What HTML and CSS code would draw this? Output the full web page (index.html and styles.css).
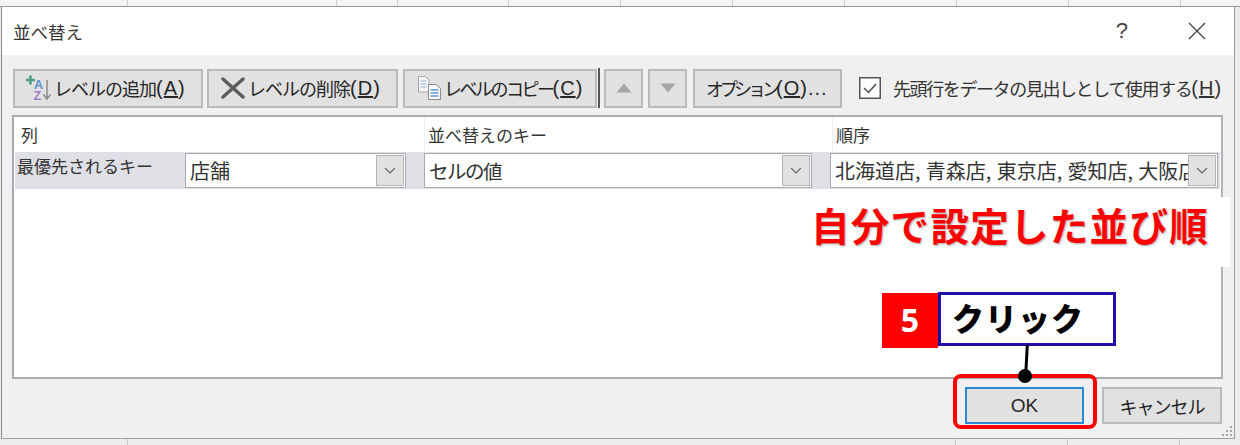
FILE: index.html
```html
<!DOCTYPE html>
<html lang="ja">
<head>
<meta charset="utf-8">
<title>並べ替え</title>
<link rel="stylesheet" href="styles.css">
</head>
<body>
<div class="sheet">
  <div class="gridtop"><i></i><i></i><i></i><i></i><i></i><i></i><i></i><i></i><i></i><i></i></div>
  <div class="dialog">
    <header class="titlebar">
      <span class="title">並べ替え</span>
      <span class="help">?</span>
      <svg class="close" width="18" height="18" viewBox="0 0 18 18"><path d="M1 1L17 17M17 1L1 17" stroke="#444" stroke-width="1.3" fill="none"/></svg>
    </header>
    <div class="body">
      <div class="toolbar">
        <button class="btn b-add">
          <svg width="25" height="31" viewBox="0 0 25 31">
            <path d="M0 7h9M4.500 2.500v9" stroke="#4f9f7d" stroke-width="2.600" fill="none"/>
            <text class="az"><tspan class="a" x="8" y="15.500">A</tspan><tspan class="z" x="7.500" y="26.500">Z</tspan></text>
            <path d="M21 7v19M17.500 21.500l3.500 4.500 3.500-4.500" stroke="#8a8a8a" stroke-width="1.500" fill="none"/>
          </svg>
          <span class="t17">レベルの追加</span><span class="key">(<u>A</u>)</span>
        </button>
        <button class="btn b-del">
          <svg width="24" height="22" viewBox="0 0 24 22"><path d="M2 2L22 20M22 2L2 20" stroke="#5c5c5c" stroke-width="3.400" fill="none" stroke-linecap="round"/></svg>
          <span class="t17">レベルの削除</span><span class="key">(<u>D</u>)</span>
        </button>
        <button class="btn b-copy">
          <svg width="23" height="24" viewBox="0 0 23 24">
            <path d="M.5.5h7l3.500 3.500v12H.5z" fill="#f6f6f6" stroke="#a5a5a5"/>
            <path d="M2.500 5h5.500M2.500 8h6M2.500 11h6" stroke="#8bb2da" stroke-width="1.200"/>
            <path d="M10.500 8.500h7.500l4.500 4v11h-12z" fill="#fbfbfb" stroke="#8a8a8a"/>
            <path d="M12.500 14h8M12.500 17h8M12.500 20h8" stroke="#5f9ad2" stroke-width="1.400"/>
          </svg>
          <span class="t15">レベルのコピー</span><span class="key">(<u>C</u>)</span>
        </button>
        <span class="sep"></span>
        <button class="btn b-arrow b-up"><svg width="16" height="10" viewBox="0 0 16 10"><path d="M8 .5L15.500 9.500H.5z" fill="#a6a6a6"/></svg></button>
        <button class="btn b-arrow b-down"><svg width="16" height="10" viewBox="0 0 16 10"><path d="M8 9.500L15.500 .5H.5z" fill="#a6a6a6"/></svg></button>
        <button class="btn b-opt"><span class="t14">オプション</span><span class="key">(<u>O</u>)...</span></button>
        <label class="check">
          <svg class="box" width="22" height="22" viewBox="0 0 22 22"><rect x=".75" y=".75" width="20.500" height="20.500" fill="#fff" stroke="#555" stroke-width="1.500"/><path d="M5 11l4.500 4.500L17 7" fill="none" stroke="#444" stroke-width="1.400"/></svg>
          <span class="t166">先頭行をデータの見出しとして使用する</span><span class="key">(<u>H</u>)</span>
        </label>
      </div>
      <div class="panel">
        <div class="heads">
          <span class="h-col">列</span>
          <span class="h-key">並べ替えのキー</span>
          <span class="h-ord">順序</span>
        </div>
        <div class="row">
          <span class="rowlabel">最優先されるキー</span>
          <div class="combo c-col"><span class="val">店舗</span><span class="drop"><svg width="12" height="7" viewBox="0 0 12 7"><path d="M1 1l5 5 5-5" fill="none" stroke="#666" stroke-width="1.200"/></svg></span></div>
          <div class="combo c-key"><span class="val v-key">セルの値</span><span class="drop"><svg width="12" height="7" viewBox="0 0 12 7"><path d="M1 1l5 5 5-5" fill="none" stroke="#666" stroke-width="1.200"/></svg></span></div>
          <div class="combo c-ord"><span class="val v-ord">北海道店, 青森店, 東京店, 愛知店, 大阪店</span><span class="drop"><svg width="12" height="7" viewBox="0 0 12 7"><path d="M1 1l5 5 5-5" fill="none" stroke="#666" stroke-width="1.200"/></svg></span></div>
        </div>
      </div>
      <div class="footer">
        <button class="btn b-ok">OK</button>
        <button class="btn b-cancel">キャンセル</button>
      </div>
    </div>
    <svg class="grip" width="12" height="12" viewBox="0 0 12 12"><path d="M9 1h2v2H9zM5 5h2v2H5zM9 5h2v2H9zM1 9h2v2H1zM5 9h2v2H5zM9 9h2v2H9z" fill="#a8a8a8"/></svg>
  </div>
  <div class="gridbottom"><i></i><i></i><i></i><i></i></div>

  <div class="note">自分で設定した並び順</div>
  <div class="callout"><span class="num">5</span><span class="word">クリック</span></div>
  <span class="leader"></span>
  <span class="redbox"></span>
  <span class="dot"></span>
</div>
</body>
</html>
```

FILE: styles.css
```css
* { box-sizing: border-box; }
html, body { margin: 0; padding: 0; }
body {
  width: 1240px;
  height: 445px;
  overflow: hidden;
  background: #ececec;
  font-family: "Noto Sans CJK JP", "Liberation Sans", sans-serif;
  color: #262626;
}
.sheet { position: relative; width: 1240px; height: 445px; }
.gridtop {
  height: 7px;
  background: #f4f4f4;
  border-bottom: 1px solid #9a9a9a;
  display: flex;
  padding-left: 127px;
}
.gridtop i { width: 112px; height: 6px; border-left: 1px solid #cfcfcf; flex: none; }
.gridtop i:nth-child(1) { width: 209px; }
.gridtop i:nth-child(2) { width: 61px; }
.gridtop i:nth-child(3) { width: 111px; }
.dialog {
  position: relative;
  margin-left: 1px;
  width: 1234px;
  height: 432px;
  background: #f0f0f0;
  border-left: 1px solid #8b8b8b;
  border-right: 1px solid #9a9a9a;
  border-bottom: 1px solid #a2a2a2;
  display: flex;
  flex-direction: column;
}
.titlebar {
  height: 48px;
  flex: none;
  background: #fff;
  display: flex;
  align-items: center;
  padding: 0 28px 0 11px;
}
.title { font-size: 17.500px; color: #333; flex: 1; }
.help { font-size: 22px; font-family: "Liberation Sans", sans-serif; color: #444; margin-right: 60px; }
.close { flex: none; }
.body { flex: 1; display: flex; flex-direction: column; padding: 13px 10px 0 10px; }
.toolbar { display: flex; align-items: center; height: 40px; flex: none; }
.btn {
  height: 39px;
  background: #e1e1e1;
  border: 2px solid #bababa;
  padding: 0;
  margin: 0;
  font-family: inherit;
  font-size: 18px;
  color: #262626;
  display: flex;
  align-items: center;
  justify-content: flex-start;
  white-space: nowrap;
  flex: none;
}
.t17 { letter-spacing: -1px; }
.t15 { letter-spacing: -2.500px; }
.t14 { letter-spacing: -4px; }
.t166 { letter-spacing: -1.400px; }
.key { font-family: "Liberation Sans", sans-serif; font-size: 20px; letter-spacing: 1px; }
.b-add { width: 190px; margin-left: 1px; padding-left: 11px; }
.b-del { width: 191px; margin-left: 4px; padding-left: 12px; }
.b-copy { width: 194px; margin-left: 5px; padding-left: 13px; }
.b-add svg { margin-right: 3px; }
.b-del svg { margin-right: 3px; }
.b-copy svg { margin-right: 3px; }
.az { font: bold 12.500px "Liberation Sans", sans-serif; }
.a { fill: #5c93cf; }
.z { fill: #a77fc9; }
.sep { width: 2px; height: 40px; background: #555; margin: 0 4px 0 1px; flex: none; }
.b-arrow { width: 39px; justify-content: center; }
.b-down { margin-left: 5px; }
.b-opt { width: 149px; margin-left: 6px; padding-left: 11px; }
.check { display: flex; align-items: center; font-size: 18px; margin-left: 17px; color: #333; white-space: nowrap; }
.box { margin-right: 12px; flex: none; }
.panel {
  margin: 7px 0 0 0;
  width: 1211px;
  height: 264px;
  background: #fff;
  border: 2px solid #a9abb4;
  border-right-color: #b4b4b4;
  flex: none;
}
.heads { display: flex; height: 35px; align-items: center; font-size: 17px; color: #333; }
.h-col { width: 410px; padding-left: 7px; }
.h-key { width: 408px; padding-left: 3px; }
.heads span + span { border-left: 1px solid #f0f0f0; height: 35px; line-height: 35px; }
.h-ord { padding-left: 3px; }
.row { display: flex; height: 37px; background: #dfdfe6; margin: 0 1px 0 1px; }
.rowlabel { width: 170px; flex: none; font-size: 17px; line-height: 28px; padding-left: 2px; color: #333; }
.combo {
  height: 35px;
  margin-top: 1px;
  background: #fff;
  border: 1px solid #a9a9b2;
  display: flex;
  align-items: center;
  font-size: 20px;
  padding: 1px 1px 1px 4px;
  flex: none;
  overflow: hidden;
}
.val { flex: 1; overflow: hidden; white-space: nowrap; color: #333; }
.v-key { font-size: 19.500px; letter-spacing: -1.500px; }
.v-ord { word-spacing: .8px; }
.drop {
  width: 28px;
  height: 31px;
  flex: none;
  background: #e1e1e1;
  border: 1px solid #b4b4b4;
  display: flex;
  align-items: center;
  justify-content: center;
}
.c-col { width: 221px; margin-right: 18px; }
.c-key { width: 388px; margin-right: 18px; }
.c-ord { width: 388px; }
.footer { display: flex; justify-content: flex-end; padding: 8px 2px 0 0; flex: none; }
.b-ok { width: 119px; height: 37px; border: 2px solid #2b87d3; margin-right: 18px; font-family: "Liberation Sans", sans-serif; font-size: 19px; justify-content: center; }
.b-cancel { width: 120px; height: 37px; font-size: 18px; letter-spacing: -1px; justify-content: center; }
.grip { position: absolute; right: 1px; bottom: 1px; }
.gridbottom { height: 6px; display: flex; padding-left: 127px; }
.gridbottom i { width: 112px; height: 6px; border-left: 1px solid #c8c8c8; flex: none; }
.gridbottom i:nth-child(1) { width: 828px; }

.note {
  position: absolute;
  left: 805px;
  top: 197px;
  width: 425px;
  height: 70px;
  background: #fff;
  color: #ff0000;
  font-size: 38.500px;
  font-weight: 700;
  line-height: 54px;
  letter-spacing: 1.300px;
  padding-left: 6px;
  white-space: nowrap;
  text-shadow: 1px 1px 2px rgba(90, 90, 90, .55);
}
.callout { position: absolute; left: 882px; top: 292px; display: flex; height: 56px; }
.num {
  width: 56px;
  height: 55px;
  background: #ff0000;
  color: #fff;
  font: bold 32px/54px "Noto Sans", sans-serif;
  text-align: center;
  margin-top: 1px;
}
.word {
  width: 178px;
  height: 54px;
  background: #fff;
  border: 3px solid #1f0fa8;
  color: #000;
  font-size: 32px;
  font-weight: 900;
  letter-spacing: 1px;
  line-height: 44px;
  padding-left: 11px;
}
.leader { position: absolute; left: 1024.500px; top: 345px; width: 3px; height: 30px; background: #000; transform: rotate(3deg); }
.dot { position: absolute; left: 1018px; top: 369px; width: 14px; height: 14px; border-radius: 50%; background: #000; }
.redbox { position: absolute; left: 953px; top: 374px; width: 144px; height: 55px; border: 4px solid #ff0000; border-radius: 8px; }
```
